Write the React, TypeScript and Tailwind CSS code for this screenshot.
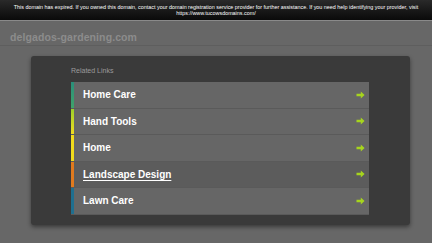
import React from "react"

const links = [
  { label: "Home Care", bar: "bg-gradient-to-b from-[#2a8f7a] to-[#3fa36a]", hover: false },
  { label: "Hand Tools", bar: "bg-gradient-to-b from-[#9ccf2a] to-[#f0dc20]", hover: false },
  { label: "Home", bar: "bg-[#f2dc1c]", hover: false },
  { label: "Landscape Design", bar: "bg-[#e07a1e]", hover: true },
  { label: "Lawn Care", bar: "bg-[#1f6f8f]", hover: false },
]

export default function App() {
  return (
    <div className="min-h-[243px] w-[432px] bg-[#676767] font-['Liberation_Sans',Arial,sans-serif] overflow-hidden">
      <div className="h-[21px] bg-gradient-to-b from-[#2a2a2a] to-[#0a0a0a] border-b border-[#8a8a8a] flex flex-col items-center justify-center text-[5.4px] leading-[6.5px] text-white text-center px-2">
        <p>
          This domain has expired. If you owned this domain, contact your domain registration service provider for further assistance. If you need help identifying your provider, visit
        </p>
        <p>https://www.tucowsdomains.com/</p>
      </div>
      <div className="h-[25px] border-b border-[#5e5e5e] pt-[10px] px-[10px]">
        <span className="block text-[10.5px] leading-[12px] font-bold text-[#8c8c8c] tracking-[0.1px]">delgados-gardening.com</span>
      </div>
      <div className="px-[31px] pt-[10px]">
        <div className="w-[379px] h-[169px] bg-[#3a3a3a] rounded-[3px] shadow-[0_2px_4px_rgba(0,0,0,0.45)] pt-[10px] pl-[40px]">
          <div className="text-[7px] text-[#9a9a9a] h-[16px]">Related Links</div>
          <ul className="w-[298px]">
            {links.map((l) => (
              <li
                key={l.label}
                className={`flex h-[26.5px] border-b border-[#5a5a5a] ${l.hover ? "bg-[#5c5c5c]" : "bg-[#666666]"}`}
              >
                <div className={`w-[3px] ${l.bar}`} />
                <div className="flex-1 flex items-center justify-between pl-[9px] pr-[4px]">
                  <span className={`text-[10px] font-bold text-white ${l.hover ? "underline underline-offset-[1.5px]" : ""}`}>
                    {l.label}
                  </span>
                  <svg width="9" height="8" viewBox="0 0 9 8">
                    <path d="M0.5 2.8h4.3V0.6L8.6 4 4.8 7.4V5.2H0.5z" fill="#a6d41e" />
                  </svg>
                </div>
              </li>
            ))}
          </ul>
        </div>
      </div>
    </div>
  )
}
